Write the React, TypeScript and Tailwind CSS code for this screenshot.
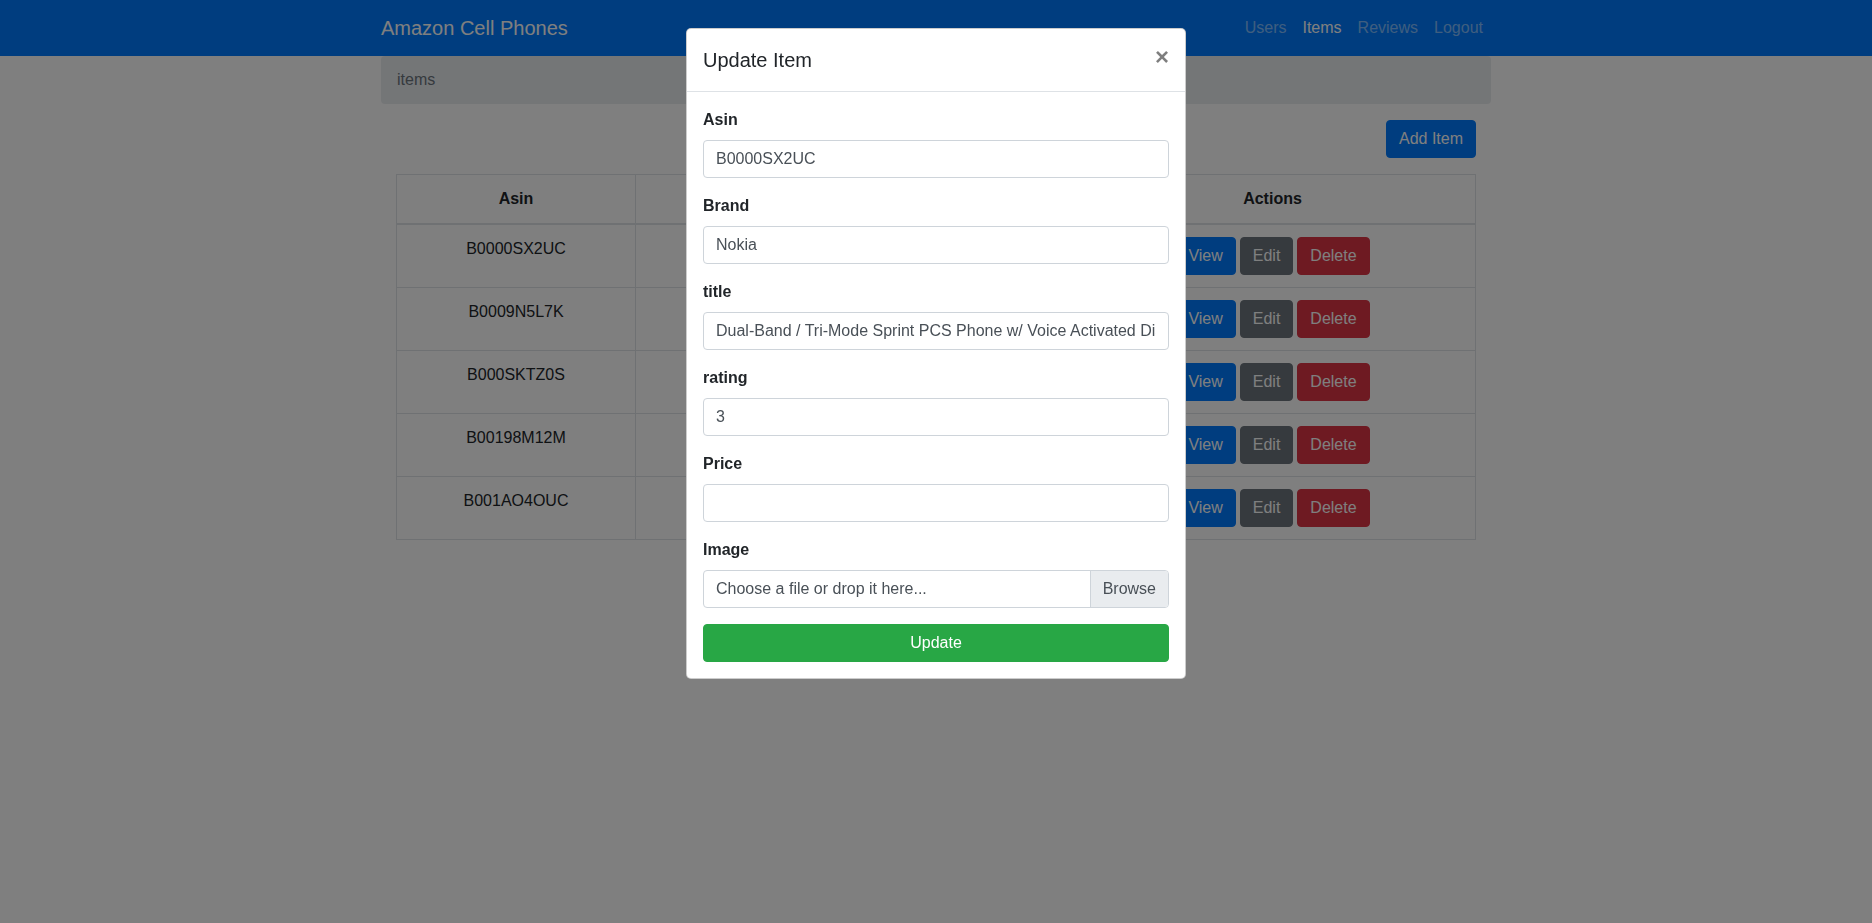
const rows = ["B0000SX2UC", "B0009N5L7K", "B000SKTZ0S", "B00198M12M", "B001AO4OUC"];

const Field = ({label, value}: {label: string; value: string}) => (
  <div className="mb-4">
    <label className="block mb-2 font-bold leading-6 text-[#212529]">{label}</label>
    <input
      defaultValue={value}
      className="block w-full h-[38px] px-3 py-1.5 leading-6 text-[#495057] bg-white border border-[#ced4da] rounded outline-none"
    />
  </div>
);

export default function App() {
  return (
    <div className="min-h-[923px] bg-white text-base leading-6 text-[#212529] font-['Liberation_Sans',Arial,sans-serif]">
      {/* navbar */}
      <nav className="bg-[#007bff] py-2">
        <div className="w-[1140px] mx-auto px-[15px] flex items-center justify-between">
          <a className="text-xl leading-[30px] py-[5px] text-white">Amazon Cell Phones</a>
          <ul className="flex">
            <li><a className="block px-2 py-2 text-white/50">Users</a></li>
            <li><a className="block px-2 py-2 text-white">Items</a></li>
            <li><a className="block px-2 py-2 text-white/50">Reviews</a></li>
            <li><a className="block px-2 py-2 text-white/50">Logout</a></li>
          </ul>
        </div>
      </nav>

      <div className="w-[1140px] mx-auto px-[15px]">
        <ol className="bg-[#e9ecef] rounded px-4 py-3 mb-4 text-[#6c757d]">
          <li>items</li>
        </ol>

        <div className="px-[15px]">
          <div className="flex justify-end mb-4">
            <button className="h-[38px] px-3 rounded bg-[#007bff] border border-[#007bff] text-white">Add Item</button>
          </div>

          {/* middle columns sit under the modal */}
          <table className="w-full table-fixed border-collapse border border-[#dee2e6] text-center">
            <colgroup>
              <col className="w-[239px]" />
              <col className="w-[217px]" />
              <col className="w-[217px]" />
              <col />
            </colgroup>
            <thead>
              <tr>
                <th className="p-3 border border-[#dee2e6] border-b-2 font-bold">Asin</th>
                <th className="p-3 border border-[#dee2e6] border-b-2 font-bold"></th>
                <th className="p-3 border border-[#dee2e6] border-b-2 font-bold"></th>
                <th className="p-3 border border-[#dee2e6] border-b-2 font-bold">Actions</th>
              </tr>
            </thead>
            <tbody>
              {rows.map((asin) => (
                <tr key={asin}>
                  <td className="p-3 border border-[#dee2e6] align-top">{asin}</td>
                  <td className="p-3 border border-[#dee2e6] align-top"></td>
                  <td className="p-3 border border-[#dee2e6] align-top"></td>
                  <td className="p-3 border border-[#dee2e6] align-top">
                    <div className="flex justify-center gap-1">
                      <button className="h-[38px] px-3 rounded bg-[#007bff] border border-[#007bff] text-white">View</button>
                      <button className="h-[38px] px-3 rounded bg-[#6c757d] border border-[#6c757d] text-white">Edit</button>
                      <button className="h-[38px] px-3 rounded bg-[#dc3545] border border-[#dc3545] text-white">Delete</button>
                    </div>
                  </td>
                </tr>
              ))}
            </tbody>
          </table>
        </div>
      </div>

      {/* backdrop */}
      <div className="fixed inset-0 bg-[rgba(0,0,0,0.5)]" />

      {/* modal */}
      <div className="fixed inset-0 flex justify-center items-start pt-7">
        <div className="w-[500px] bg-white border border-[rgba(0,0,0,0.2)] rounded-[5px]">
          <div className="flex items-start justify-between p-4 border-b border-[#dee2e6]">
            <h5 className="text-xl leading-[30px] font-medium text-[#212529]">Update Item</h5>
            <button className="-m-4 ml-auto p-4 text-2xl leading-none font-bold text-black opacity-50 [text-shadow:0_1px_0_#fff]">×</button>
          </div>
          <div className="p-4">
            <Field label="Asin" value="B0000SX2UC" />
            <Field label="Brand" value="Nokia" />
            <Field label="title" value="Dual-Band / Tri-Mode Sprint PCS Phone w/ Voice Activated Dialing & Bluetooth" />
            <Field label="rating" value="3" />
            <Field label="Price" value="" />
            <div className="mb-4">
              <label className="block mb-2 font-bold leading-6 text-[#212529]">Image</label>
              <div className="flex h-[38px] border border-[#ced4da] rounded overflow-hidden text-[#495057]">
                <span className="flex-1 px-3 py-1.5">Choose a file or drop it here...</span>
                <span className="px-3 py-1.5 bg-[#e9ecef] border-l border-[#ced4da]">Browse</span>
              </div>
            </div>
            <button className="block w-full h-[38px] rounded bg-[#28a745] border border-[#28a745] text-white">Update</button>
          </div>
        </div>
      </div>
    </div>
  );
}
